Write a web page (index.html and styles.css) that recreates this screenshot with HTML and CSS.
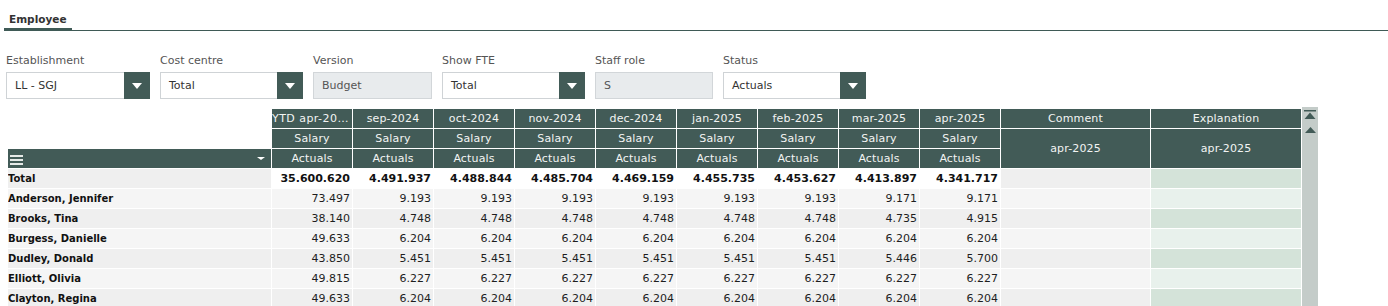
FILE: index.html
```html
<!DOCTYPE html>
<html lang="en">
<head>
    <meta charset="UTF-8">
    <meta name="viewport" content="width=device-width, initial-scale=1.0">
    <title>Employee</title>
    <link rel="stylesheet" href="styles.css">
</head>
<body>
    <div class="tabs">
        <div class="tab active">Employee</div>
    </div>

    <div class="filters">
        <div class="filter w-144">
            <label>Establishment</label>
            <div class="select"><span class="value">LL - SGJ</span><span class="drop"></span></div>
        </div>
        <div class="filter w-143">
            <label>Cost centre</label>
            <div class="select"><span class="value">Total</span><span class="drop"></span></div>
        </div>
        <div class="filter w-119">
            <label>Version</label>
            <div class="readonly">Budget</div>
        </div>
        <div class="filter w-143">
            <label>Show FTE</label>
            <div class="select"><span class="value">Total</span><span class="drop"></span></div>
        </div>
        <div class="filter w-118">
            <label>Staff role</label>
            <div class="readonly">S</div>
        </div>
        <div class="filter w-143">
            <label>Status</label>
            <div class="select"><span class="value">Actuals</span><span class="drop"></span></div>
        </div>
    </div>

    <div class="grid-wrap">
        <table class="grid">
            <colgroup>
                <col class="c-name">
                <col class="c-num"><col class="c-num"><col class="c-num"><col class="c-num"><col class="c-num">
                <col class="c-num"><col class="c-num"><col class="c-num"><col class="c-num">
                <col class="c-comment">
                <col class="c-expl">
            </colgroup>
            <thead>
                <tr>
                    <th class="blank"></th>
                    <th class="ytd">YTD apr-2025</th>
                    <th>sep-2024</th>
                    <th>oct-2024</th>
                    <th>nov-2024</th>
                    <th>dec-2024</th>
                    <th>jan-2025</th>
                    <th>feb-2025</th>
                    <th>mar-2025</th>
                    <th>apr-2025</th>
                    <th>Comment</th>
                    <th>Explanation</th>
                </tr>
                <tr>
                    <th class="blank"></th>
                    <th>Salary</th><th>Salary</th><th>Salary</th><th>Salary</th><th>Salary</th>
                    <th>Salary</th><th>Salary</th><th>Salary</th><th>Salary</th>
                    <th rowspan="2">apr-2025</th>
                    <th rowspan="2">apr-2025</th>
                </tr>
                <tr>
                    <th class="menu">
                        <svg class="burger" width="13" height="10" viewBox="0 0 13 10"><rect y="0" width="13" height="2"/><rect y="4" width="13" height="2"/><rect y="8" width="13" height="2"/></svg>
                        <span class="caret"></span>
                    </th>
                    <th>Actuals</th><th>Actuals</th><th>Actuals</th><th>Actuals</th><th>Actuals</th>
                    <th>Actuals</th><th>Actuals</th><th>Actuals</th><th>Actuals</th>
                </tr>
            </thead>
            <tbody>
                <tr class="total dark">
                    <td class="name">Total</td>
                    <td>35.600.620</td><td>4.491.937</td><td>4.488.844</td><td>4.485.704</td><td>4.469.159</td>
                    <td>4.455.735</td><td>4.453.627</td><td>4.413.897</td><td>4.341.717</td>
                    <td class="comment"></td><td class="expl"></td>
                </tr>
                <tr class="light">
                    <td class="name">Anderson, Jennifer</td>
                    <td>73.497</td><td>9.193</td><td>9.193</td><td>9.193</td><td>9.193</td>
                    <td>9.193</td><td>9.193</td><td>9.171</td><td>9.171</td>
                    <td class="comment"></td><td class="expl"></td>
                </tr>
                <tr class="dark">
                    <td class="name">Brooks, Tina</td>
                    <td>38.140</td><td>4.748</td><td>4.748</td><td>4.748</td><td>4.748</td>
                    <td>4.748</td><td>4.748</td><td>4.735</td><td>4.915</td>
                    <td class="comment"></td><td class="expl"></td>
                </tr>
                <tr class="light">
                    <td class="name">Burgess, Danielle</td>
                    <td>49.633</td><td>6.204</td><td>6.204</td><td>6.204</td><td>6.204</td>
                    <td>6.204</td><td>6.204</td><td>6.204</td><td>6.204</td>
                    <td class="comment"></td><td class="expl"></td>
                </tr>
                <tr class="dark">
                    <td class="name">Dudley, Donald</td>
                    <td>43.850</td><td>5.451</td><td>5.451</td><td>5.451</td><td>5.451</td>
                    <td>5.451</td><td>5.451</td><td>5.446</td><td>5.700</td>
                    <td class="comment"></td><td class="expl"></td>
                </tr>
                <tr class="light">
                    <td class="name">Elliott, Olivia</td>
                    <td>49.815</td><td>6.227</td><td>6.227</td><td>6.227</td><td>6.227</td>
                    <td>6.227</td><td>6.227</td><td>6.227</td><td>6.227</td>
                    <td class="comment"></td><td class="expl"></td>
                </tr>
                <tr class="dark">
                    <td class="name">Clayton, Regina</td>
                    <td>49.633</td><td>6.204</td><td>6.204</td><td>6.204</td><td>6.204</td>
                    <td>6.204</td><td>6.204</td><td>6.204</td><td>6.204</td>
                    <td class="comment"></td><td class="expl"></td>
                </tr>
            </tbody>
        </table>

        <div class="scrollbar">
            <svg class="sb-top" width="12" height="9" viewBox="0 0 12 9"><rect x="0" y="0" width="12" height="1.5"/><polygon points="6,2.5 11.5,9 0.5,9"/></svg>
            <svg class="sb-up" width="11" height="6" viewBox="0 0 11 6"><polygon points="5.5,0 11,6 0,6"/></svg>
        </div>
    </div>
</body>
</html>
```

FILE: styles.css
```css
:root {
    --brand: #425b57;
    --line: #3f5a56;
    --text: #1e1e1e;
    --label: #555;
    --row-dark: #efefef;
    --row-light: #f5f5f5;
    --expl-dark: #d4e3d9;
    --expl-light: #e8f1ec;
}

* {
    box-sizing: border-box;
}

body {
    margin: 0;
    font-family: 'DejaVu Sans', Verdana, sans-serif;
    font-size: 11px;
    color: var(--text);
    background: #fff;
    overflow: hidden;
}

/* Tabs */
.tabs {
    display: flex;
    margin-left: 4px;
    border-bottom: 1px solid var(--line);
    height: 31px;
}

.tab {
    padding: 12px 5px 2px;
    line-height: 14px;
    height: 31px;
    font-size: 10.5px;
    font-weight: bold;
    color: #333;
    border-bottom: 3px solid var(--line);
}

/* Filters */
.filters {
    display: flex;
    gap: 10px;
    padding: 0 6px;
    margin-top: 23px;
}

.filter label {
    display: block;
    line-height: 14px;
    margin-bottom: 4px;
    color: var(--label);
}

.w-144 { width: 144px; }
.w-143 { width: 143px; }
.w-119 { width: 119px; }
.w-118 { width: 118px; }

.select {
    display: flex;
    height: 27px;
}

.select .value {
    flex: 1;
    border: 1px solid #cfd3d6;
    border-right: none;
    padding-left: 8px;
    line-height: 25px;
    color: #333;
}

.select .drop {
    width: 26px;
    background: var(--brand);
    display: flex;
    align-items: center;
    justify-content: center;
}

.select .drop::after {
    content: "";
    border-left: 5.5px solid transparent;
    border-right: 5.5px solid transparent;
    border-top: 6px solid #fff;
    margin-top: 1px;
}

.readonly {
    height: 27px;
    background: #e8ebed;
    border: 1px solid #d2d6d9;
    padding-left: 8px;
    line-height: 25px;
    color: #555;
}

/* Grid */
.grid-wrap {
    display: flex;
    align-items: flex-start;
    margin-top: 8px;
    padding-left: 7px;
}

.grid {
    table-layout: fixed;
    border-collapse: separate;
    border-spacing: 1px;
    margin-top: 1px;
    width: 1295px;
}

.c-name { width: 263px; }
.c-num { width: 80px; }
.c-comment { width: 149px; }
.c-expl { width: 150px; }

.grid th,
.grid td {
    height: 19px;
    padding: 0 2px;
    line-height: 19px;
    white-space: nowrap;
    overflow: hidden;
    text-overflow: ellipsis;
}

.grid th {
    background: var(--brand);
    color: #f2f4f3;
    font-weight: normal;
    text-align: center;
    padding: 0 1px;
    letter-spacing: 0.15px;
}

.grid th.ytd {
    text-align: left;
    padding: 0;
    letter-spacing: 0.45px;
}

.grid th.blank {
    background: #fff;
}

.grid th.menu {
    position: relative;
    text-align: left;
}

.burger {
    fill: #e6eae8;
    display: block;
    margin: 2px 0 0 1px;
}

.caret {
    position: absolute;
    right: 6px;
    top: 8px;
    border-left: 4px solid transparent;
    border-right: 4px solid transparent;
    border-top: 3px solid #fff;
}

.grid td {
    text-align: right;
}

.grid td.name {
    text-align: left;
    padding-left: 0;
    font-weight: bold;
    font-size: 10px;
    color: #111;
}

.grid tr.dark td { background: var(--row-dark); }
.grid tr.light td { background: var(--row-light); }
.grid tr.dark td.expl { background: var(--expl-dark); }
.grid tr.light td.expl { background: var(--expl-light); }

.grid tr.total td {
    background: #fff;
    font-weight: bold;
    color: #111;
}

.grid tr.total td.name,
.grid tr.total td.comment {
    background: var(--row-dark);
}

.grid tr.total td.expl {
    background: var(--expl-dark);
}

/* Scrollbar */
.scrollbar {
    width: 16px;
    height: 220px;
    background: #c4ccc9;
    display: flex;
    flex-direction: column;
    align-items: center;
    padding-top: 3px;
    gap: 8px;
}

.scrollbar svg {
    fill: var(--brand);
}
```
